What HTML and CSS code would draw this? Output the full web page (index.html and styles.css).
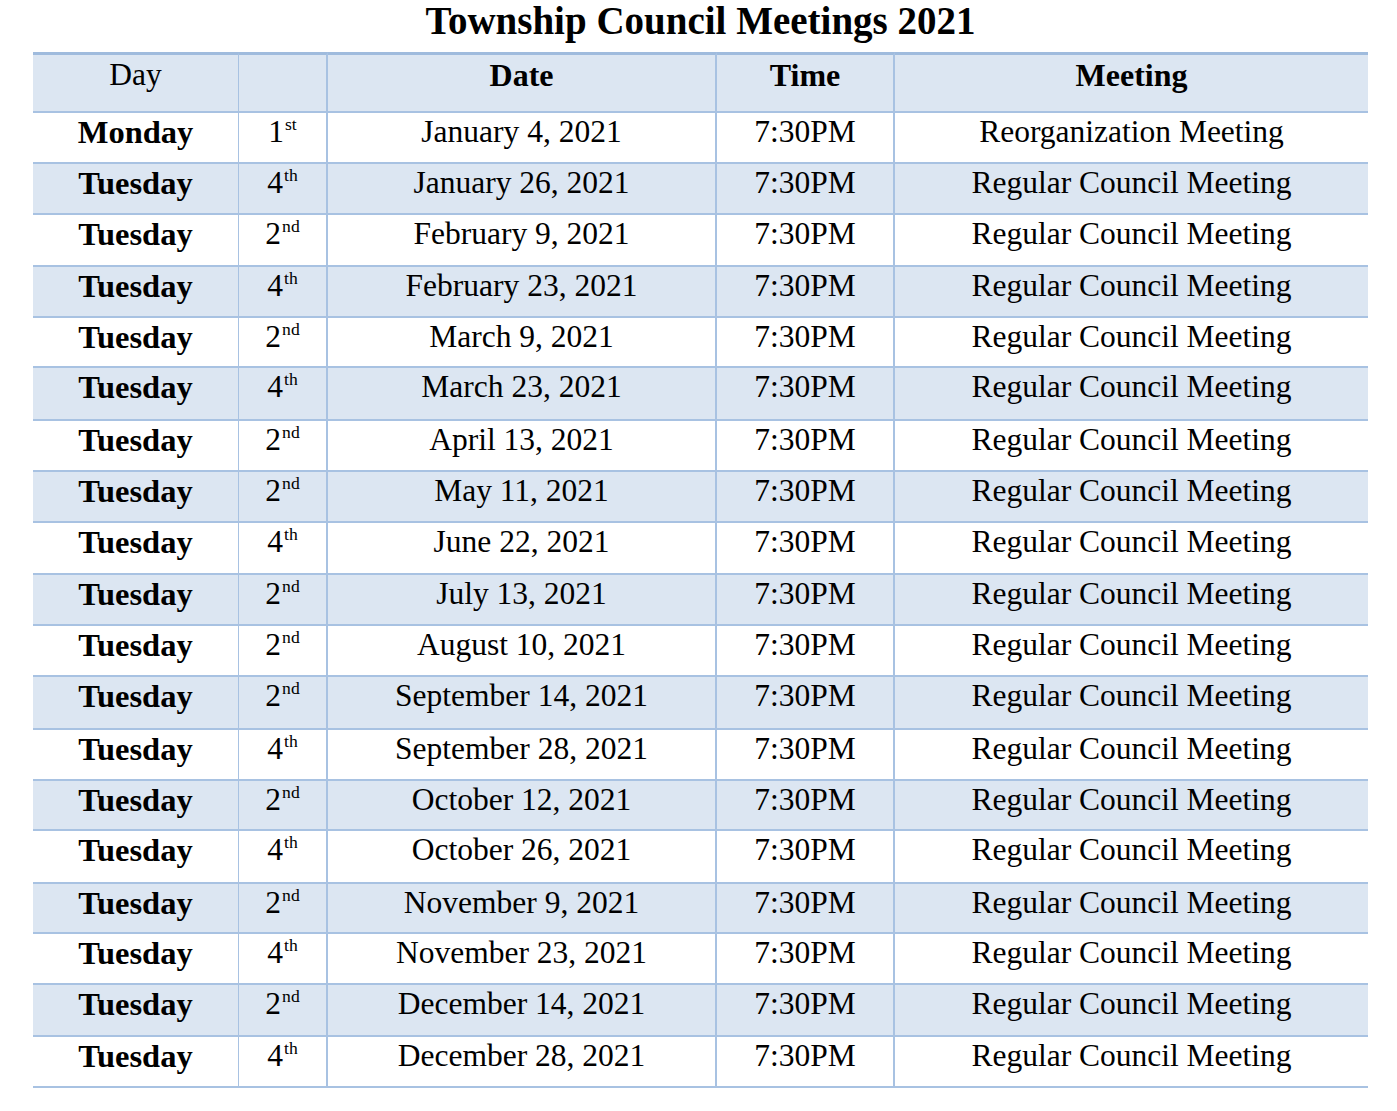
FILE: index.html
```html
<!DOCTYPE html>
<html lang="en">
<head>
<meta charset="utf-8">
<title>Township Council Meetings 2021</title>
<link rel="stylesheet" href="styles.css">
</head>
<body>
<h1 class="title">Township Council Meetings 2021</h1>
<table class="schedule">
  <colgroup>
    <col class="c-day"><col class="c-ord"><col class="c-date"><col class="c-time"><col class="c-meet">
  </colgroup>
  <thead>
    <tr class="head">
      <th class="plain">Day</th><th></th><th>Date</th><th>Time</th><th>Meeting</th>
    </tr>
  </thead>
  <tbody>
    <tr class="h51"><td class="day">Monday</td><td>1<sup>st</sup></td><td>January 4, 2021</td><td>7:30PM</td><td>Reorganization Meeting</td></tr>
    <tr class="h51 band"><td class="day">Tuesday</td><td>4<sup>th</sup></td><td>January 26, 2021</td><td>7:30PM</td><td>Regular Council Meeting</td></tr>
    <tr class="h52"><td class="day">Tuesday</td><td>2<sup>nd</sup></td><td>February 9, 2021</td><td>7:30PM</td><td>Regular Council Meeting</td></tr>
    <tr class="h51 band"><td class="day">Tuesday</td><td>4<sup>th</sup></td><td>February 23, 2021</td><td>7:30PM</td><td>Regular Council Meeting</td></tr>
    <tr class="h50"><td class="day">Tuesday</td><td>2<sup>nd</sup></td><td>March 9, 2021</td><td>7:30PM</td><td>Regular Council Meeting</td></tr>
    <tr class="h53 band"><td class="day">Tuesday</td><td>4<sup>th</sup></td><td>March 23, 2021</td><td>7:30PM</td><td>Regular Council Meeting</td></tr>
    <tr class="h51"><td class="day">Tuesday</td><td>2<sup>nd</sup></td><td>April 13, 2021</td><td>7:30PM</td><td>Regular Council Meeting</td></tr>
    <tr class="h51 band"><td class="day">Tuesday</td><td>2<sup>nd</sup></td><td>May 11, 2021</td><td>7:30PM</td><td>Regular Council Meeting</td></tr>
    <tr class="h52"><td class="day">Tuesday</td><td>4<sup>th</sup></td><td>June 22, 2021</td><td>7:30PM</td><td>Regular Council Meeting</td></tr>
    <tr class="h51 band"><td class="day">Tuesday</td><td>2<sup>nd</sup></td><td>July 13, 2021</td><td>7:30PM</td><td>Regular Council Meeting</td></tr>
    <tr class="h51"><td class="day">Tuesday</td><td>2<sup>nd</sup></td><td>August 10, 2021</td><td>7:30PM</td><td>Regular Council Meeting</td></tr>
    <tr class="h53 band"><td class="day">Tuesday</td><td>2<sup>nd</sup></td><td>September 14, 2021</td><td>7:30PM</td><td>Regular Council Meeting</td></tr>
    <tr class="h51"><td class="day">Tuesday</td><td>4<sup>th</sup></td><td>September 28, 2021</td><td>7:30PM</td><td>Regular Council Meeting</td></tr>
    <tr class="h50 band"><td class="day">Tuesday</td><td>2<sup>nd</sup></td><td>October 12, 2021</td><td>7:30PM</td><td>Regular Council Meeting</td></tr>
    <tr class="h53"><td class="day">Tuesday</td><td>4<sup>th</sup></td><td>October 26, 2021</td><td>7:30PM</td><td>Regular Council Meeting</td></tr>
    <tr class="h50 band"><td class="day">Tuesday</td><td>2<sup>nd</sup></td><td>November 9, 2021</td><td>7:30PM</td><td>Regular Council Meeting</td></tr>
    <tr class="h51"><td class="day">Tuesday</td><td>4<sup>th</sup></td><td>November 23, 2021</td><td>7:30PM</td><td>Regular Council Meeting</td></tr>
    <tr class="h52 band"><td class="day">Tuesday</td><td>2<sup>nd</sup></td><td>December 14, 2021</td><td>7:30PM</td><td>Regular Council Meeting</td></tr>
    <tr class="h51"><td class="day">Tuesday</td><td>4<sup>th</sup></td><td>December 28, 2021</td><td>7:30PM</td><td>Regular Council Meeting</td></tr>
  </tbody>
</table>
</body>
</html>
```

FILE: styles.css
```css
html, body {
  margin: 0;
  padding: 0;
  background: #ffffff;
}

body {
  font-family: "Liberation Serif", "Times New Roman", serif;
  color: #000000;
}

.title {
  margin: 0;
  height: 52px;
  font-size: 39px;
  line-height: 42px;
  font-weight: bold;
  text-align: center;
  padding-left: 4px;
  box-sizing: border-box;
}

.schedule {
  margin-left: 33px;
  width: 1335px;
  table-layout: fixed;
  border-collapse: separate;
  border-spacing: 0;
}

.c-day { width: 206px; }
.c-ord { width: 89px; }
.c-date { width: 389px; }
.c-time { width: 178px; }
.c-meet { width: 473px; }

.schedule th,
.schedule td {
  padding: 0;
  text-align: center;
  vertical-align: top;
  font-size: 31.5px;
  line-height: 36px;
  font-weight: normal;
  border-bottom: 2px solid #a8c2e2;
  white-space: nowrap;
}

.schedule th:nth-child(1),
.schedule td:nth-child(1) {
  border-right: 1px solid #a8c2e2;
}

.schedule th:nth-child(2),
.schedule td:nth-child(2),
.schedule th:nth-child(3),
.schedule td:nth-child(3),
.schedule th:nth-child(4),
.schedule td:nth-child(4) {
  border-right: 2px solid #a8c2e2;
}

.head {
  height: 61px;
  background: #dce6f2;
}

.schedule th {
  border-top: 3px solid #9fbbdd;
  padding-top: 2px;
  font-weight: bold;
  font-size: 32px;
}

.schedule th.plain {
  font-weight: normal;
  font-size: 31.5px;
}

.schedule td {
  padding-top: 1px;
}

.schedule td.day {
  font-weight: bold;
  font-size: 32.5px;
}

.band {
  background: #dce6f2;
}

.h50 { height: 50px; }
.h51 { height: 51px; }
.h52 { height: 52px; }
.h53 { height: 53px; }

sup {
  font-size: 0.56em;
  line-height: 0;
  vertical-align: 0.7em;
  margin-left: 1px;
}
```
